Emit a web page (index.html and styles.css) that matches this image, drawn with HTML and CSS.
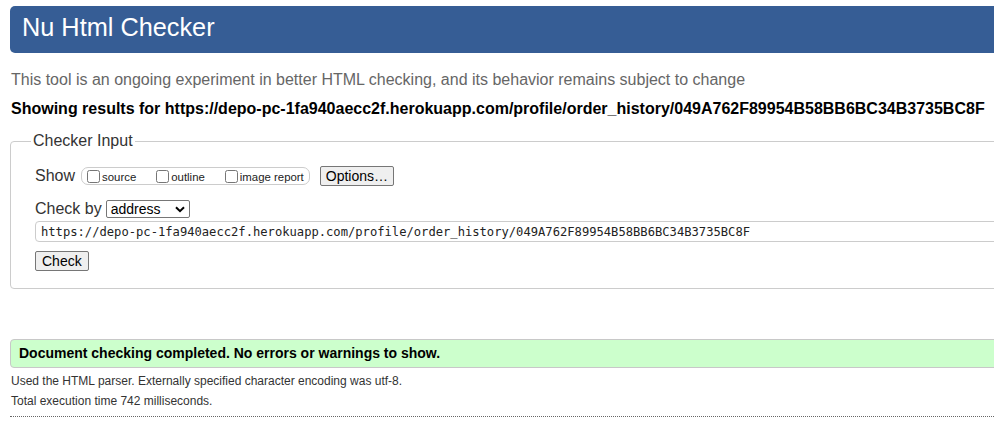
FILE: index.html
```html
<!DOCTYPE html>
<html lang="en">
<head>
<meta charset="utf-8">
<title>Showing results for https://depo-pc-1fa940aecc2f.herokuapp.com/profile/order_history/049A762F89954B58BB6BC34B3735BC8F - Nu Html Checker</title>
<link rel="stylesheet" href="styles.css">
</head>
<body>
<div class="page">
  <h1 class="title">Nu Html Checker</h1>
  <p class="intro">This tool is an ongoing experiment in better HTML checking, and its behavior remains subject to change</p>
  <p class="showing">Showing results for https://depo-pc-1fa940aecc2f.herokuapp.com/profile/order_history/049A762F89954B58BB6BC34B3735BC8F</p>
  <fieldset class="input">
    <legend class="legend">Checker Input</legend>
    <div class="row row-show">
      <span class="label">Show</span>
      <span class="group">
        <label class="opt"><input type="checkbox" class="cb">source</label>
        <label class="opt"><input type="checkbox" class="cb">outline</label>
        <label class="opt opt-last"><input type="checkbox" class="cb">image report</label>
      </span>
      <button class="btn btn-options" type="button">Options…</button>
    </div>
    <div class="row row-by">
      <span class="label">Check by</span>
      <span class="select"><span class="select-text">address</span><svg class="chev" width="10" height="7" viewBox="0 0 10 7"><path d="M1 1.2 L5 5.2 L9 1.2" fill="none" stroke="#000" stroke-width="2"/></svg></span>
    </div>
    <input class="url" type="text" value="https://depo-pc-1fa940aecc2f.herokuapp.com/profile/order_history/049A762F89954B58BB6BC34B3735BC8F">
    <div class="row-check">
      <button class="btn btn-check" type="button">Check</button>
    </div>
  </fieldset>
  <p class="success">Document checking completed. No errors or warnings to show.</p>
  <div class="details">
    <p class="detail">Used the HTML parser. Externally specified character encoding was utf-8.</p>
    <p class="detail">Total execution time 742 milliseconds.</p>
  </div>
</div>
</body>
</html>
```

FILE: styles.css
```css
html {
  overflow: hidden;
  background: #fff;
}
body {
  margin: 0;
  padding: 6px 0 0 10px;
  font-family: "Liberation Sans", Arial, sans-serif;
  color: #000;
}
.page {
  width: 1030px;
}
.title {
  margin: 0;
  background: #365d95;
  color: #fff;
  font-size: 25.3px;
  font-weight: normal;
  line-height: 43px;
  padding: 0 0 4px 12px;
  border-radius: 5px 0 0 5px;
}
.intro {
  margin: 17px 0 0 1px;
  font-size: 16px;
  line-height: 20px;
  color: #666;
}
.showing {
  margin: 9px 0 0 1px;
  font-size: 16px;
  line-height: 20px;
  font-weight: bold;
  color: #000;
}
.input {
  margin: 13px 0 0 0;
  padding: 0 0 17px 24px;
  border: 1px solid #ccc;
  border-radius: 4px;
  min-width: 0;
}
.legend {
  margin-left: -4px;
  padding: 0 2px;
  font-size: 16px;
  line-height: 18px;
  color: #333;
}
.row {
  display: flex;
  align-items: center;
  height: 22px;
}
.row-show {
  margin-top: 15px;
}
.row-by {
  margin-top: 11px;
}
.label {
  font-size: 16px;
  color: #333;
}
.group {
  display: flex;
  align-items: center;
  height: 18px;
  box-sizing: border-box;
  margin-left: 6px;
  padding: 0 5px;
  border: 1px solid #ccc;
  border-radius: 7px;
}
.opt {
  display: flex;
  align-items: center;
  font-size: 11.4px;
  color: #222;
  margin-right: 20px;
  line-height: 14px;
  padding-top: 2px;
}
.opt-last {
  margin-right: 0;
}
.cb {
  width: 13px;
  height: 13px;
  margin: -2px 2px 0 0;
}
.btn {
  font-family: "Liberation Sans", Arial, sans-serif;
  font-size: 14px;
  line-height: 16px;
  height: 20px;
  box-sizing: border-box;
  padding: 1px 5px;
  background: #efefef;
  border: 1px solid #767676;
  border-radius: 2px;
  color: #000;
}
.btn-check {
  padding: 1px 6px;
}
.btn-options {
  margin-left: 10px;
}
.select {
  display: flex;
  align-items: center;
  justify-content: space-between;
  width: 84px;
  height: 18px;
  box-sizing: border-box;
  margin-left: 4px;
  padding: 0 4px 0 4px;
  border: 1px solid #767676;
  border-radius: 2px;
  background: #fff;
  font-size: 14px;
  color: #000;
}
.url {
  display: block;
  margin: 1px 0 0 0;
  width: 1000px;
  height: 21px;
  box-sizing: border-box;
  padding: 0 5px;
  border: 1px solid #ccc;
  border-radius: 4px;
  font-family: "DejaVu Sans Mono", "Liberation Mono", monospace;
  font-size: 12.15px;
  color: #222;
  background: #fff;
}
.row-check {
  margin-top: 9px;
  display: flex;
}
.success {
  margin: 50px 0 0 0;
  padding-left: 8px;
  background: #ccffcc;
  border: 1px solid #c8c8c8;
  border-radius: 4px 0 0 4px;
  font-size: 14px;
  font-weight: bold;
  line-height: 27px;
}
.details {
  margin-top: 3px;
  padding-bottom: 5px;
  border-bottom: 1px dotted #666;
}
.detail {
  margin: 0 0 0 1px;
  font-size: 12px;
  line-height: 20px;
  color: #333;
}
```
